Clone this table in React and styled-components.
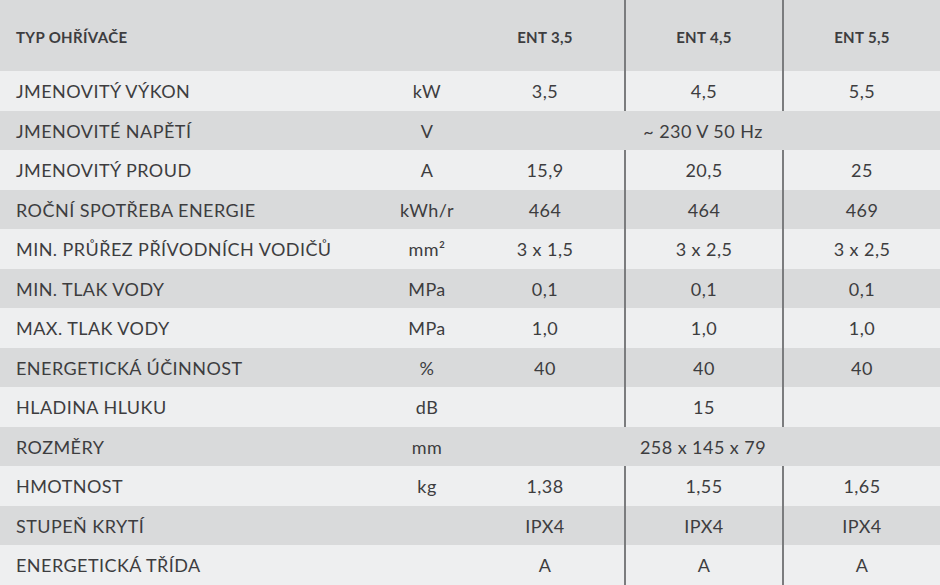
import React from 'react';
import styled, { createGlobalStyle } from 'styled-components';

const GlobalStyle = createGlobalStyle`
  html, body {
    margin: 0;
    padding: 0;
    background: #eeeff0;
  }
  body {
    font-family: "Lato", "Open Sans", "Liberation Sans", sans-serif;
    color: #3d3d3f;
  }
`;

const Table = styled.div`
  width: 940px;
  display: flex;
  flex-direction: column;
`;

const Row = styled.div`
  display: grid;
  grid-template-columns: 388px 78px 158px 158px 158px;
  height: ${p => (p.$head ? '71px' : '39.5px')};
  background: ${p => (p.$dark ? '#d9dadb' : '#eeeff0')};
`;

const Cell = styled.div`
  display: flex;
  align-items: center;
  justify-content: ${p => (p.$left ? 'flex-start' : 'center')};
  padding-left: ${p => (p.$left ? '16px' : '0')};
  padding-top: 1px;
  font-size: 18px;
  letter-spacing: 0.45px;
  white-space: nowrap;
  box-sizing: border-box;
  border-left: ${p => (p.$line ? '2px solid #7b7c7e' : 'none')};
  grid-column: ${p => (p.$span ? `span ${p.$span}` : 'auto')};
`;

const HeadCell = styled(Cell)`
  padding-top: 3px;
  font-size: 15px;
  font-weight: 700;
  letter-spacing: 0.35px;
`;

const rows = [
  ['JMENOVITÝ VÝKON', 'kW', ['3,5', '4,5', '5,5']],
  ['JMENOVITÉ NAPĚTÍ', 'V', '~ 230 V 50 Hz'],
  ['JMENOVITÝ PROUD', 'A', ['15,9', '20,5', '25']],
  ['ROČNÍ SPOTŘEBA ENERGIE', 'kWh/r', ['464', '464', '469']],
  ['MIN. PRŮŘEZ PŘÍVODNÍCH VODIČŮ', 'mm²', ['3 x 1,5', '3 x 2,5', '3 x 2,5']],
  ['MIN. TLAK VODY', 'MPa', ['0,1', '0,1', '0,1']],
  ['MAX. TLAK VODY', 'MPa', ['1,0', '1,0', '1,0']],
  ['ENERGETICKÁ ÚČINNOST', '%', ['40', '40', '40']],
  ['HLADINA HLUKU', 'dB', ['', '15', '']],
  ['ROZMĚRY', 'mm', '258 x 145 x 79'],
  ['HMOTNOST', 'kg', ['1,38', '1,55', '1,65']],
  ['STUPEŇ KRYTÍ', '', ['IPX4', 'IPX4', 'IPX4']],
  ['ENERGETICKÁ TŘÍDA', '', ['A', 'A', 'A']],
];

export default function App() {
  return (
    <>
      <GlobalStyle />
      <Table>
        <Row $head $dark>
          <HeadCell $left>TYP OHŘÍVAČE</HeadCell>
          <HeadCell />
          <HeadCell>ENT 3,5</HeadCell>
          <HeadCell $line>ENT 4,5</HeadCell>
          <HeadCell $line>ENT 5,5</HeadCell>
        </Row>
        {rows.map(([label, unit, values], i) => (
          <Row key={label} $dark={i % 2 === 1}>
            <Cell $left>{label}</Cell>
            <Cell>{unit}</Cell>
            {Array.isArray(values) ? (
              <>
                <Cell>{values[0]}</Cell>
                <Cell $line>{values[1]}</Cell>
                <Cell $line>{values[2]}</Cell>
              </>
            ) : (
              <Cell $span={3}>{values}</Cell>
            )}
          </Row>
        ))}
      </Table>
    </>
  );
}
